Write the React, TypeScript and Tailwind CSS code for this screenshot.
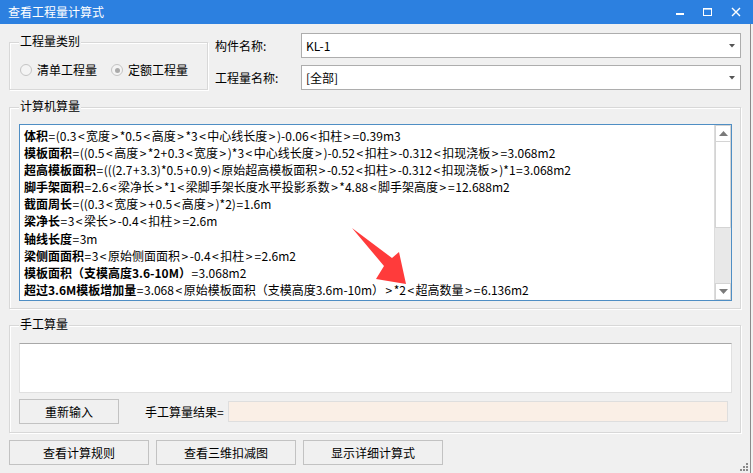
import React from "react";

const F = { fontFamily: "'Noto Sans CJK SC', 'Noto Sans', sans-serif" };

function Group({ title, className, children }: { title: string; className: string; children?: React.ReactNode }) {
  return (
    <div className={"relative border border-[#d8d8d8] shadow-[inset_1px_1px_0_#ffffff,1px_1px_0_#ffffff] " + className}>
      <span className="absolute left-[9px] top-[-10px] bg-[#f0f0f0] px-[1px] text-[12px] leading-[16px] text-black">{title}</span>
      {children}
    </div>
  );
}

function Combo({ value }: { value: string }) {
  return (
    <div className="flex h-[25px] w-[440px] items-center justify-between border border-[#adadad] bg-white pl-[4px] pr-[5px] text-[12px] text-black">
      <span>{value}</span>
      <svg width="6" height="4" viewBox="0 0 6 4"><path d="M0 0h6L3 3.5z" fill="#555" /></svg>
    </div>
  );
}

function Radio({ checked, label }: { checked?: boolean; label: string }) {
  return (
    <div className="flex items-center gap-[5px]">
      <div className="flex h-[12px] w-[12px] items-center justify-center rounded-full border border-[#c4c4c4] bg-[#f4f4f4]">
        {checked && <div className="h-[5px] w-[5px] rounded-full bg-[#aaaaaa]" />}
      </div>
      <span className="text-[12px] text-black">{label}</span>
    </div>
  );
}

const lines: [string, string][] = [
  ["体积", "=(0.3<宽度>*0.5<高度>*3<中心线长度>)-0.06<扣柱>=0.39m3"],
  ["模板面积", "=((0.5<高度>*2+0.3<宽度>)*3<中心线长度>)-0.52<扣柱>-0.312<扣现浇板>=3.068m2"],
  ["超高模板面积", "=(((2.7+3.3)*0.5+0.9)<原始超高模板面积>-0.52<扣柱>-0.312<扣现浇板>)*1=3.068m2"],
  ["脚手架面积", "=2.6<梁净长>*1<梁脚手架长度水平投影系数>*4.88<脚手架高度>=12.688m2"],
  ["截面周长", "=((0.3<宽度>+0.5<高度>)*2)=1.6m"],
  ["梁净长", "=3<梁长>-0.4<扣柱>=2.6m"],
  ["轴线长度", "=3m"],
  ["梁侧面面积", "=3<原始侧面面积>-0.4<扣柱>=2.6m2"],
  ["模板面积（支模高度3.6-10M）", "=3.068m2"],
  ["超过3.6M模板增加量", "=3.068<原始模板面积（支模高度3.6m-10m）>*2<超高数量>=6.136m2"],
];

function Rest({ text }: { text: string }) {
  const parts = text.split(/([<>=+])/);
  return (
    <>
      {parts.map((p, i) =>
        p === "<" || p === ">" ? (
          <span key={i} className="px-[1.5px]">{p}</span>
        ) : p === "=" || p === "+" ? (
          <span key={i} className="px-[0.5px]">{p}</span>
        ) : (
          <span key={i}>{p}</span>
        )
      )}
    </>
  );
}

function Btn({ label, w }: { label: string; w: string }) {
  return (
    <div className={"flex h-[25px] items-center justify-center border border-[#c2c2c2] bg-[#f0f0f0] text-[12px] text-black " + w}>
      {label}
    </div>
  );
}

export default function App() {
  return (
    <div style={F} className="relative h-[473px] w-[753px] overflow-hidden bg-[#f0f0f0]">
      {/* title bar */}
      <div className="flex h-[24px] items-center justify-between bg-[#2c80e0] pl-[8px] text-[12px] text-white">
        <span>查看工程量计算式</span>
        <div className="flex items-center">
          <svg width="12" height="12" viewBox="0 0 12 12" className="mr-[16px]"><rect x="2" y="7" width="8" height="2" fill="#fff" /></svg>
          <svg width="12" height="12" viewBox="0 0 12 12" className="mr-[16px]"><rect x="1.5" y="2.5" width="8" height="7" fill="none" stroke="#fff" /><rect x="1.5" y="2" width="8" height="1.6" fill="#fff" /></svg>
          <svg width="12" height="12" viewBox="0 0 12 12" className="mr-[11px]"><path d="M2 2L10 10M10 2L2 10" stroke="#fff" strokeWidth="1.4" /></svg>
        </div>
      </div>
      <div className="absolute right-[2px] top-[24px] bottom-0 w-[1px] bg-[#8a8a8a]" />

      <div className="pl-[9px]">
        {/* top row */}
        <div className="mt-[9px] flex">
          <Group title="工程量类别" className="mt-[9px] h-[48px] w-[199px]">
            <div className="flex h-full items-center gap-[14px] pl-[10px] pt-[8px]">
              <Radio label="清单工程量" />
              <Radio label="定额工程量" checked />
            </div>
          </Group>
          <div className="ml-[7px] flex w-[86px] flex-col text-[12px] text-black">
            <div className="flex h-[25px] items-center">构件名称:</div>
            <div className="mt-[7px] flex h-[25px] items-center">工程量名称:</div>
          </div>
          <div className="flex flex-col gap-[7px]">
            <Combo value="KL-1" />
            <Combo value="[全部]" />
          </div>
        </div>

        {/* 计算机算量 */}
        <Group title="计算机算量" className="mt-[17px] h-[202px] w-[732px]">
          <div className="ml-[9px] mt-[16px] flex h-[177px] w-[713px] border border-[#4f8ec4] bg-white">
            <div className="relative flex-1 pl-[4px] pt-[2px] text-[12px] leading-[17.1px] text-black whitespace-nowrap">
              {lines.map(([b, r], i) => (
                <div key={i}>
                  <span className="font-bold">{b}</span>
                  <Rest text={r} />
                </div>
              ))}
              <svg className="absolute left-[332px] top-[103px]" width="60" height="62" viewBox="0 0 60 62">
                <path d="M0 0 L40 30 L47 24 L54 56 L24 51 L32 38 Z" fill="#ff3b3b" />
              </svg>
            </div>
            <div className="flex w-[17px] flex-col border-l border-[#dcdcdc] bg-[#e8e8e8]">
              <div className="flex h-[17px] items-center justify-center border border-[#d4d4d4] bg-white">
                <svg width="9" height="5" viewBox="0 0 9 5"><path d="M4.5 0L9 5H0z" fill="#7a7a7a" /></svg>
              </div>
              <div className="h-[86px] border border-t-0 border-[#d4d4d4] bg-white" />
              <div className="flex-1" />
              <div className="flex h-[17px] items-center justify-center border border-[#d4d4d4] bg-white">
                <svg width="9" height="5" viewBox="0 0 9 5"><path d="M0 0H9L4.5 5z" fill="#7a7a7a" /></svg>
              </div>
            </div>
          </div>
        </Group>

        {/* 手工算量 */}
        <Group title="手工算量" className="mt-[16px] h-[108px] w-[732px]">
          <div className="ml-[9px] mt-[17px] h-[50px] w-[713px] border border-[#e0e0e0] border-t-[#a8a8a8] bg-white" />
          <div className="ml-[9px] mt-[6px] flex items-center">
            <Btn label="重新输入" w="w-[100px]" />
            <span className="ml-[26px] text-[12px] text-black">手工算量结果=</span>
            <div className="ml-[4px] h-[21px] w-[500px] border border-[#dedede] bg-[#faefe6]" />
          </div>
        </Group>

        {/* bottom buttons */}
        <div className="mt-[7px] flex gap-[7px]">
          <Btn label="查看计算规则" w="w-[140px]" />
          <Btn label="查看三维扣减图" w="w-[140px]" />
          <Btn label="显示详细计算式" w="w-[140px]" />
        </div>
      </div>

      <svg className="absolute right-[5px] bottom-[2px]" width="8" height="8" viewBox="0 0 8 8">
        <rect x="6" y="0" width="2" height="2" fill="#8a8a8a" />
        <rect x="3" y="3" width="2" height="2" fill="#8a8a8a" />
        <rect x="6" y="3" width="2" height="2" fill="#8a8a8a" />
        <rect x="0" y="6" width="2" height="2" fill="#8a8a8a" />
        <rect x="3" y="6" width="2" height="2" fill="#8a8a8a" />
        <rect x="6" y="6" width="2" height="2" fill="#8a8a8a" />
      </svg>
    </div>
  );
}
